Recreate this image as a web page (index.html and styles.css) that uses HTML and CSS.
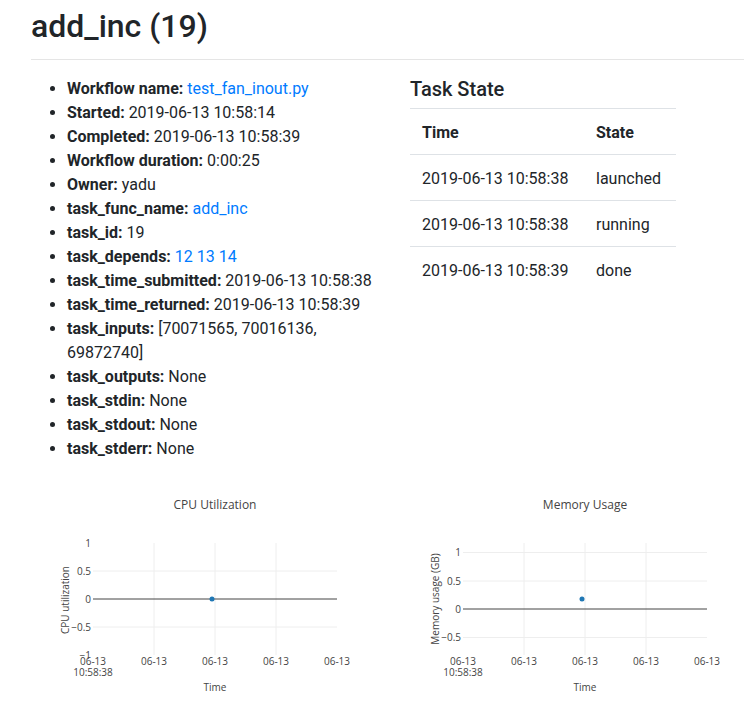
FILE: index.html
```html
<!DOCTYPE html>
<html lang="en">
<head>
<meta charset="utf-8">
<title>add_inc (19)</title>
<link rel="stylesheet" href="styles.css">
</head>
<body>
<div class="container">
  <h1 class="title">add_inc (19)</h1>
  <hr class="rule">
  <div class="row">
    <div class="col">
      <ul class="info">
        <li><b>Workflow name:</b> <a href="#">test_fan_inout.py</a></li>
        <li><b>Started:</b> 2019-06-13 10:58:14</li>
        <li><b>Completed:</b> 2019-06-13 10:58:39</li>
        <li><b>Workflow duration:</b> 0:00:25</li>
        <li><b>Owner:</b> yadu</li>
        <li><b>task_func_name:</b> <a href="#">add_inc</a></li>
        <li><b>task_id:</b> 19</li>
        <li><b>task_depends:</b> <a href="#">12</a> <a href="#">13</a> <a href="#">14</a></li>
        <li><b>task_time_submitted:</b> 2019-06-13 10:58:38</li>
        <li><b>task_time_returned:</b> 2019-06-13 10:58:39</li>
        <li><b>task_inputs:</b> [70071565, 70016136, 69872740]</li>
        <li><b>task_outputs:</b> None</li>
        <li><b>task_stdin:</b> None</li>
        <li><b>task_stdout:</b> None</li>
        <li><b>task_stderr:</b> None</li>
      </ul>
    </div>
    <div class="col">
      <h5 class="subtitle">Task State</h5>
      <table class="states">
        <thead>
          <tr><th class="c-time">Time</th><th>State</th></tr>
        </thead>
        <tbody>
          <tr><td>2019-06-13 10:58:38</td><td>launched</td></tr>
          <tr><td>2019-06-13 10:58:38</td><td>running</td></tr>
          <tr><td>2019-06-13 10:58:39</td><td>done</td></tr>
        </tbody>
      </table>
    </div>
  </div>
  <div class="row charts">
    <div class="col">
      <svg class="chart" width="349" height="215" viewBox="0 0 349 215">
        <text class="ctitle" x="184" y="19">CPU Utilization</text>
        <g class="grid">
          <line x1="123" y1="53" x2="123" y2="165"/>
          <line x1="184" y1="53" x2="184" y2="165"/>
          <line x1="245" y1="53" x2="245" y2="165"/>
          <line x1="62" y1="81" x2="306" y2="81"/>
          <line x1="62" y1="137" x2="306" y2="137"/>
        </g>
        <line class="zero" x1="62" y1="109" x2="306" y2="109"/>
        <g class="ytick">
          <text x="60" y="56.5">1</text>
          <text x="60" y="84.5">0.5</text>
          <text x="60" y="112.5">0</text>
          <text x="60" y="140.5">−0.5</text>
          <text x="60" y="168.5">−1</text>
        </g>
        <g class="xtick">
          <text x="62" y="174.5">06-13</text>
          <text x="62" y="185.5">10:58:38</text>
          <text x="123" y="174.5">06-13</text>
          <text x="184" y="174.5">06-13</text>
          <text x="245" y="174.5">06-13</text>
          <text x="306" y="174.5">06-13</text>
        </g>
        <text class="axtitle" x="184" y="200.5">Time</text>
        <text class="axtitle" transform="translate(37.5,110) rotate(-90)">CPU utilization</text>
        <circle class="pt" cx="181" cy="109" r="2.5"/>
      </svg>
    </div>
    <div class="col">
      <svg class="chart" width="334" height="215" viewBox="0 0 334 215">
        <text class="ctitle" x="175" y="19">Memory Usage</text>
        <g class="grid">
          <line x1="114" y1="53" x2="114" y2="165"/>
          <line x1="175" y1="53" x2="175" y2="165"/>
          <line x1="236" y1="53" x2="236" y2="165"/>
          <line x1="53" y1="62.5" x2="297" y2="62.5"/>
          <line x1="53" y1="91" x2="297" y2="91"/>
          <line x1="53" y1="147.5" x2="297" y2="147.5"/>
        </g>
        <line class="zero" x1="53" y1="119" x2="297" y2="119"/>
        <g class="ytick">
          <text x="51" y="66">1</text>
          <text x="51" y="94.5">0.5</text>
          <text x="51" y="122.5">0</text>
          <text x="51" y="151">−0.5</text>
        </g>
        <g class="xtick">
          <text x="53" y="174.5">06-13</text>
          <text x="53" y="185.5">10:58:38</text>
          <text x="114" y="174.5">06-13</text>
          <text x="175" y="174.5">06-13</text>
          <text x="236" y="174.5">06-13</text>
          <text x="297" y="174.5">06-13</text>
        </g>
        <text class="axtitle" x="175" y="200.5">Time</text>
        <text class="axtitle" transform="translate(28.5,109) rotate(-90)">Memory usage (GB)</text>
        <circle class="pt" cx="172" cy="109" r="2.5"/>
      </svg>
    </div>
  </div>
</div>
</body>
</html>
```
FILE: styles.css
```css
html, body {
  margin: 0;
  padding: 0;
  background: #fff;
}
body {
  font-family: Roboto, "Liberation Sans", sans-serif;
  font-size: 16px;
  line-height: 24px;
  color: #212529;
}
.container {
  padding-left: 31px;
  overflow: hidden;
}
.title {
  font-size: 32px;
  font-weight: 500;
  line-height: 38px;
  margin: 7px 0 0;
}
.rule {
  border: 0;
  border-top: 1px solid rgba(0, 0, 0, 0.1);
  height: 0;
  margin: 14px 0 17px;
}
.row {
  display: grid;
  grid-template-columns: 349px 1fr;
  column-gap: 30px;
}
.col {
  min-width: 0;
}
.info {
  margin: 0 0 15px;
  padding-left: 36px;
}
.info b {
  font-weight: 700;
}
a {
  color: #007bff;
  text-decoration: none;
}
.subtitle {
  font-size: 20px;
  font-weight: 500;
  line-height: 24px;
  margin: 0 0 7px;
}
.states {
  border-collapse: collapse;
  width: 266px;
}
.states th,
.states td {
  text-align: left;
  padding: 12px 12px 9px;
  line-height: 24px;
  border-top: 1px solid #dee2e6;
  vertical-align: top;
}
.states th {
  font-weight: 700;
}
.states .c-time {
  width: 150px;
}
.charts {
  padding-top: 14px;
}
.chart {
  display: block;
  overflow: visible;
  font-family: "Open Sans", Verdana, Arial, sans-serif;
}
.ctitle {
  font-size: 12px;
  fill: #444;
  text-anchor: middle;
}
.grid line {
  stroke: #eee;
  stroke-width: 1;
}
.zero {
  stroke: #444;
  stroke-width: 1;
}
.ytick text {
  font-size: 10px;
  fill: #444;
  text-anchor: end;
}
.xtick text {
  font-size: 10px;
  fill: #444;
  text-anchor: middle;
}
.axtitle {
  font-size: 10px;
  fill: #444;
  text-anchor: middle;
}
.pt {
  fill: #1f77b4;
}
```
